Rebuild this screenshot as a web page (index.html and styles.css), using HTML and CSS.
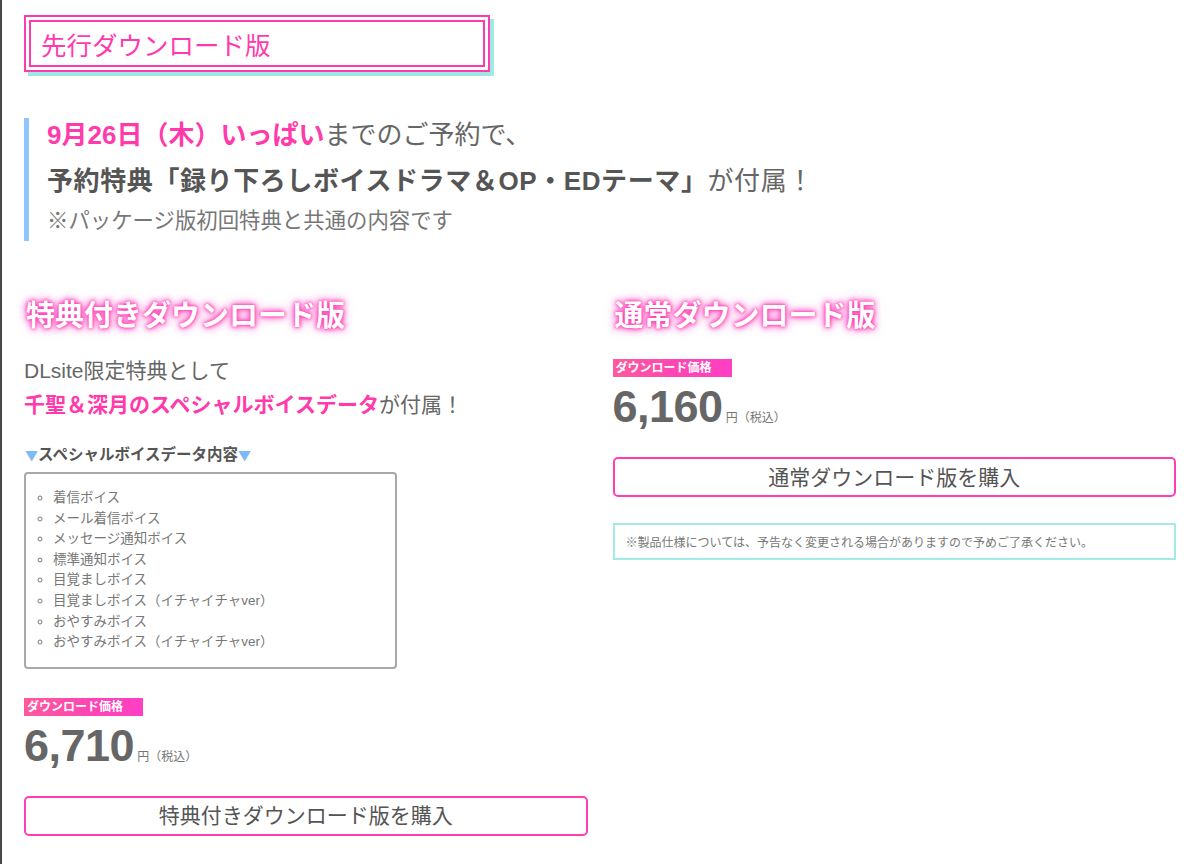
FILE: index.html
```html
<!DOCTYPE html>
<html lang="ja">
<head>
<meta charset="utf-8">
<title>先行ダウンロード版</title>
<link rel="stylesheet" href="styles.css">
</head>
<body>
<div class="page">
  <div class="title">先行ダウンロード版</div>

  <div class="notice">
    <p class="n1"><strong class="pink">9月26日（木）いっぱい</strong>までのご予約で、</p>
    <p class="n2"><strong>予約特典「録り下ろしボイスドラマ＆OP・EDテーマ」</strong>が付属！</p>
    <p class="n3">※パッケージ版初回特典と共通の内容です</p>
  </div>

  <div class="cols">
    <section class="col">
      <h2 class="glow">特典付きダウンロード版</h2>
      <div class="lead">
        <p>DLsite限定特典として</p>
        <p><strong class="pink">千聖＆深月のスペシャルボイスデータ</strong>が付属！</p>
      </div>
      <h3 class="sub"><span class="tri">▼</span>スペシャルボイスデータ内容<span class="tri">▼</span></h3>
      <ul class="voices">
        <li>着信ボイス</li>
        <li>メール着信ボイス</li>
        <li>メッセージ通知ボイス</li>
        <li>標準通知ボイス</li>
        <li>目覚ましボイス</li>
        <li>目覚ましボイス（イチャイチャver）</li>
        <li>おやすみボイス</li>
        <li>おやすみボイス（イチャイチャver）</li>
      </ul>
      <div class="tag tag-left">ダウンロード価格</div>
      <div class="price"><span class="num">6,710</span><span class="yen">円（税込）</span></div>
      <a class="buy" href="#">特典付きダウンロード版を購入</a>
    </section>

    <section class="col">
      <h2 class="glow">通常ダウンロード版</h2>
      <div class="tag tag-right">ダウンロード価格</div>
      <div class="price"><span class="num">6,160</span><span class="yen">円（税込）</span></div>
      <a class="buy" href="#">通常ダウンロード版を購入</a>
      <div class="spec">※製品仕様については、予告なく変更される場合がありますので予めご了承ください。</div>
    </section>
  </div>
</div>
</body>
</html>
```

FILE: styles.css
```css
* { box-sizing: border-box; }

html, body {
  margin: 0;
  padding: 0;
  background: #fff;
}

body {
  border-left: 2px solid #474747;
  min-height: 864px;
  font-family: "Liberation Sans", "Noto Sans CJK JP", sans-serif;
  color: #666;
}

p, h2, h3, ul { margin: 0; padding: 0; }

.pink { color: #ff3aaa; }

.page {
  padding: 15px 24px 0 22px;
}

.title {
  width: 466px;
  height: 57px;
  border: 2px solid #ff3aaf;
  box-shadow: inset 0 0 0 3px #fff, inset 0 0 0 5px #ff3aaf, 4px 4px 0 #9fe9e5;
  color: #ff3aaf;
  font-family: "Noto Sans CJK JP", sans-serif;
  font-size: 25.5px;
  display: flex;
  align-items: center;
  padding-left: 15px;
}

.notice {
  margin-top: 46px;
  border-left: 5px solid #8fc5fd;
  padding-left: 18px;
  padding-bottom: 3px;
}

.notice strong { font-weight: bold; color: #555; }
.notice strong.pink { color: #ff3aaa; }

.n1, .n2 {
  font-size: 26px;
  line-height: 34px;
  color: #666;
}

.n2 { margin-top: 12px; letter-spacing: 0.6px; }

.n3 {
  margin-top: 6px;
  font-size: 21.4px;
  line-height: 34px;
  color: #777;
}

.cols {
  margin-top: 52px;
  display: grid;
  grid-template-columns: 1fr 1fr;
  column-gap: 25px;
}

.col { display: flex; flex-direction: column; align-items: flex-start; }

.glow {
  font-family: "Noto Sans CJK JP", sans-serif;
  font-size: 29px;
  line-height: 40px;
  font-weight: bold;
  color: #fff;
  padding-left: 2px;
  text-shadow: 0 0 2px #ff3cb4, 0 0 4px #ff3cb4, 0 0 7px #ff4dc0, 0 0 11px #ff7bd0;
}

.lead {
  margin-top: 21px;
  font-size: 21px;
  line-height: 34px;
  color: #666;
}

.lead strong { font-weight: bold; }

.sub {
  margin-top: 21px;
  font-size: 15.5px;
  line-height: 24px;
  font-weight: bold;
  color: #555;
  padding-left: 1px;
}

.tri {
  color: #7fbaf6;
  font-weight: normal;
  font-family: "Noto Sans CJK JP", sans-serif;
  font-size: 13px;
}

.voices {
  margin-top: 5px;
  width: 373px;
  border: 2px solid #a8a8a8;
  border-radius: 4px;
  padding: 14px 0 14px 27px;
  list-style: circle;
  font-size: 13.5px;
  line-height: 20.6px;
  color: #777;
}

.tag {
  margin-top: 29px;
  width: 119px;
  height: 18px;
  padding-left: 3px;
  font-size: 12px;
  line-height: 18px;
  font-weight: bold;
  color: #fff;
  background: linear-gradient(90deg, #ff5a9c 0%, #ff45b4 55%, #ff3fc6 100%);
}

.tag-right { margin-top: 26px; }

.price {
  margin-top: 5px;
  line-height: 50px;
  height: 50px;
  color: #666;
  white-space: nowrap;
}

.num {
  font-size: 45px;
  font-weight: bold;
  letter-spacing: -0.5px;
}

.yen {
  font-size: 12px;
  margin-left: 3px;
  color: #777;
}

.buy {
  margin-top: 25px;
  align-self: stretch;
  height: 40px;
  border: 2px solid #ff3eb4;
  border-radius: 5px;
  display: flex;
  align-items: center;
  justify-content: center;
  padding-bottom: 3px;
  font-size: 21px;
  color: #555;
  text-decoration: none;
}

.spec {
  margin-top: 26px;
  align-self: stretch;
  height: 37px;
  border: 2px solid #a2ebe6;
  padding-left: 11px;
  display: flex;
  align-items: center;
  font-size: 12px;
  color: #777;
}
```
